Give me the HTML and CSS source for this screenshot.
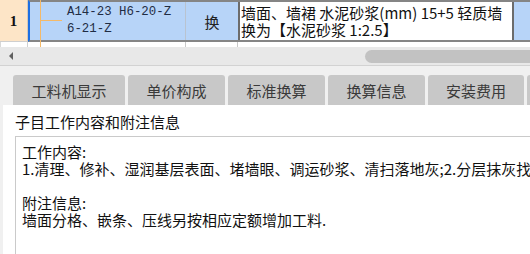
FILE: index.html
```html
<!DOCTYPE html>
<html lang="zh-CN">
<head>
<meta charset="utf-8">
<link rel="stylesheet" href="styles.css">
</head>
<body>
<div class="grid">
  <div class="row sel">
    <div class="rn">1</div>
    <div class="cells">
      <div class="code"><span class="tree-v"></span><span class="tree-h"></span><div class="code-text">A14-23 H6-20-Z<br>6-21-Z</div></div>
      <div class="chg">换</div>
      <div class="desc">墙面、墙裙 水泥砂浆(mm) 15+5 轻质墙<br>换为【水泥砂浆 1:2.5】</div>
      <div class="rest"></div>
    </div>
  </div>
  <div class="row next">
    <div class="rn rn2"></div>
    <div class="cells2">
      <div class="code2"><span class="tree-v2"></span></div>
      <div class="chg2"></div>
      <div class="desc2">墙 面、墙 裙 水泥 砂浆 混合砂浆 墙面 墙 裙 混合</div>
    </div>
  </div>
</div>
<div class="hscroll">
  <span class="arrow"></span>
  <span class="thumb"></span>
</div>
<div class="tabs">
  <div class="tab w1">工料机显示</div>
  <div class="tab">单价构成</div>
  <div class="tab">标准换算</div>
  <div class="tab">换算信息</div>
  <div class="tab w5">安装费用</div>
  <div class="tab w6"></div>
</div>
<div class="panel">
  <div class="heading">子目工作内容和附注信息</div>
  <div class="box">
    <div class="line">工作内容:</div>
    <div class="line">1.清理、修补、湿润基层表面、堵墙眼、调运砂浆、清扫落地灰;2.分层抹灰找平</div>
    <div class="line">&nbsp;</div>
    <div class="line">附注信息:</div>
    <div class="line">墙面分格、嵌条、压线另按相应定额增加工料.</div>
  </div>
</div>
</body>
</html>
```
FILE: styles.css
```css
html, body {
  margin: 0;
  padding: 0;
}
body {
  width: 530px;
  height: 254px;
  overflow: hidden;
  background: #f0f0f0;
  font-family: "Noto Sans CJK SC", "Noto Sans", sans-serif;
  color: #111;
}
.grid {
  height: 47px;
  overflow: hidden;
  background: #fff;
}
.row {
  display: flex;
  width: 530px;
}
.sel {
  height: 42px;
}
.rn {
  width: 28px;
  flex: none;
  box-sizing: border-box;
  background: #fde5c7;
  border-right: 1px solid #d6c8b8;
  border-bottom: 1px solid #cfcfcf;
  font-family: "Liberation Serif", serif;
  font-weight: bold;
  font-size: 15px;
  display: flex;
  align-items: center;
  justify-content: center;
  padding-top: 1px;
}
.cells {
  flex: 1;
  display: flex;
  box-sizing: border-box;
  border-left: 2px solid #1c6fe3;
  border-top: 2px solid #858585;
  border-bottom: 2px solid #858585;
  background: #b7d4f8;
  min-width: 0;
}
.code {
  position: relative;
  width: 156px;
  flex: none;
  box-sizing: border-box;
  border-right: 1px solid #b9c3d0;
}
.tree-v {
  position: absolute;
  left: 10px;
  top: -2px;
  bottom: -2px;
  width: 1px;
  background: #f4b968;
}
.tree-h {
  position: absolute;
  left: 10px;
  top: 18px;
  width: 22px;
  height: 1px;
  background: #f4b968;
}
.code-text {
  padding: 2px 0 0 37px;
  font-family: "Liberation Mono", monospace;
  font-size: 12.4px;
  line-height: 17px;
  color: #1f2c44;
  white-space: nowrap;
}
.chg {
  width: 52px;
  flex: none;
  display: flex;
  align-items: center;
  justify-content: center;
  font-size: 15px;
  color: #222;
}
.desc {
  width: 276px;
  flex: none;
  box-sizing: border-box;
  background: #fff;
  border-left: 2px solid #6c6c6c;
  border-right: 2px solid #6c6c6c;
  padding: 2px 0 0 1px;
  font-size: 15px;
  line-height: 17px;
  white-space: nowrap;
  overflow: hidden;
  color: #111;
}
.rest {
  flex: 1;
}
.next {
  height: 5px;
  overflow: hidden;
}
.rn2 {
  background: #fff;
  border-right: 1px solid #d0d0d0;
  border-bottom: none;
  border-left: 1px solid #d8d8d8;
}
.cells2 {
  display: flex;
  flex: 1;
  padding-left: 2px;
  min-width: 0;
  overflow: hidden;
}
.code2 {
  position: relative;
  width: 156px;
  flex: none;
  box-sizing: border-box;
  border-right: 1px solid #c8c8c8;
}
.tree-v2 {
  position: absolute;
  left: 10px;
  top: 0;
  bottom: 0;
  width: 1px;
  background: #f4b968;
}
.chg2 {
  width: 52px;
  flex: none;
  box-sizing: border-box;
  border-right: 1px solid #c8c8c8;
}
.desc2 {
  flex: 1;
  padding: 3px 0 0 2px;
  font-size: 15px;
  line-height: 17px;
  white-space: nowrap;
  overflow: hidden;
  color: #444;
}
.hscroll {
  height: 18px;
  display: flex;
  align-items: center;
  background: #e8e8e8;
  border-bottom: 1px solid #d2d2d2;
  overflow: hidden;
}
.arrow {
  width: 0;
  height: 0;
  margin-left: 9px;
  border-top: 4px solid transparent;
  border-bottom: 4px solid transparent;
  border-right: 4px solid #606060;
}
.thumb {
  margin-left: 352px;
  width: 180px;
  height: 13px;
  border-radius: 7px;
  background: #c2c2c2;
  flex: none;
}
.tabs {
  display: flex;
  gap: 3px;
  padding: 9px 0 0 13px;
  height: 30px;
  overflow: hidden;
  white-space: nowrap;
}
.tab {
  width: 97px;
  flex: none;
  height: 30px;
  box-sizing: border-box;
  background: #c8c8c8;
  border-radius: 3px 3px 0 0;
  display: flex;
  align-items: center;
  justify-content: center;
  font-size: 15px;
  color: #3a3a3a;
}
.w1 {
  width: 112px;
}
.w5 {
  width: 96px;
}
.w6 {
  width: 100px;
}
.panel {
  margin-left: 3px;
  background: #fff;
  height: 149px;
  padding-top: 8px;
  box-sizing: border-box;
  overflow: hidden;
}
.heading {
  padding-left: 12px;
  font-size: 15px;
  line-height: 17px;
  color: #111;
}
.box {
  margin: 6px 0 0 12px;
  height: 118px;
  box-sizing: border-box;
  border: 1px solid #cacaca;
  border-right: none;
  border-bottom: none;
  padding: 6px 0 0 6px;
  overflow: hidden;
}
.line {
  font-size: 15px;
  line-height: 17px;
  white-space: nowrap;
  color: #111;
}
```
